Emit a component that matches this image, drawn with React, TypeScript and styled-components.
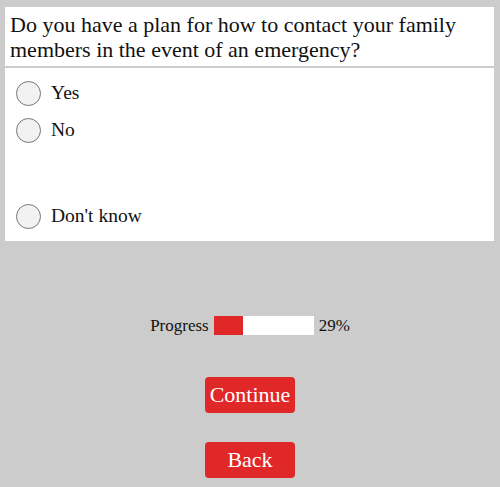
import React from 'react'
import styled, {createGlobalStyle} from 'styled-components'

const GlobalStyle = createGlobalStyle`
  body {
    margin: 0;
    background: #cccccc;
    font-family: 'Liberation Serif', 'DejaVu Serif', serif;
    color: #111111;
  }
`

const options = ['Yes', 'No', "Don't know"]
const progress = 29

const Page = styled.main`
  display: flex;
  flex-direction: column;
  align-items: center;
  padding-top: 7px;
`

const Panel = styled.section`
  width: 489px;
  align-self: flex-start;
  margin-left: 5px;
  background: #ffffff;
`

const Question = styled.h1`
  margin: 0;
  padding: 5px 5px 4px;
  font-size: 22px;
  font-weight: 400;
  line-height: 25px;
  border-bottom: 2px solid #cccccc;
`

const OptionList = styled.div`
  display: flex;
  flex-direction: column;
  gap: 11px;
  padding: 12px 0 12px 11px;
`

const Option = styled.label<{$spaced?: boolean}>`
  display: flex;
  align-items: center;
  gap: 10px;
  height: 26px;
  font-size: 19.5px;
  margin-top: ${p => (p.$spaced ? '49px' : '0')};
  cursor: pointer;
`

const Radio = styled.span`
  width: 23px;
  height: 23px;
  border-radius: 50%;
  border: 1.5px solid #777777;
  background: #f2f2f2;
  flex: none;
`

const ProgressRow = styled.div`
  display: flex;
  align-items: center;
  gap: 5px;
  margin-top: 75px;
  font-size: 17px;
  line-height: 19px;
`

const Track = styled.div`
  width: 100px;
  height: 19px;
  background: #ffffff;
  display: flex;
`

const Fill = styled.div`
  height: 100%;
  background: #e02828;
`

const Button = styled.button<{$gap: number}>`
  width: 90px;
  height: 36px;
  border: none;
  border-radius: 4px;
  background: #e02828;
  color: #ffffff;
  font-family: 'Liberation Serif', 'DejaVu Serif', serif;
  font-size: 22px;
  padding: 0;
  cursor: pointer;
  margin-top: ${p => p.$gap}px;
`

const App: React.FC = () => {
  return (
    <Page>
      <GlobalStyle />
      <Panel>
        <Question>
          Do you have a plan for how to contact your family members in the event of an emergency?
        </Question>
        <OptionList>
          {options.map((o, i) => (
            <Option key={o} $spaced={i === 2}>
              <Radio />
              {o}
            </Option>
          ))}
        </OptionList>
      </Panel>
      <ProgressRow>
        <span>Progress</span>
        <Track>
          <Fill style={{width: `${progress}%`}} />
        </Track>
        <span>{progress}%</span>
      </ProgressRow>
      <Button $gap={42}>Continue</Button>
      <Button $gap={29}>Back</Button>
    </Page>
  )
}

export default App
